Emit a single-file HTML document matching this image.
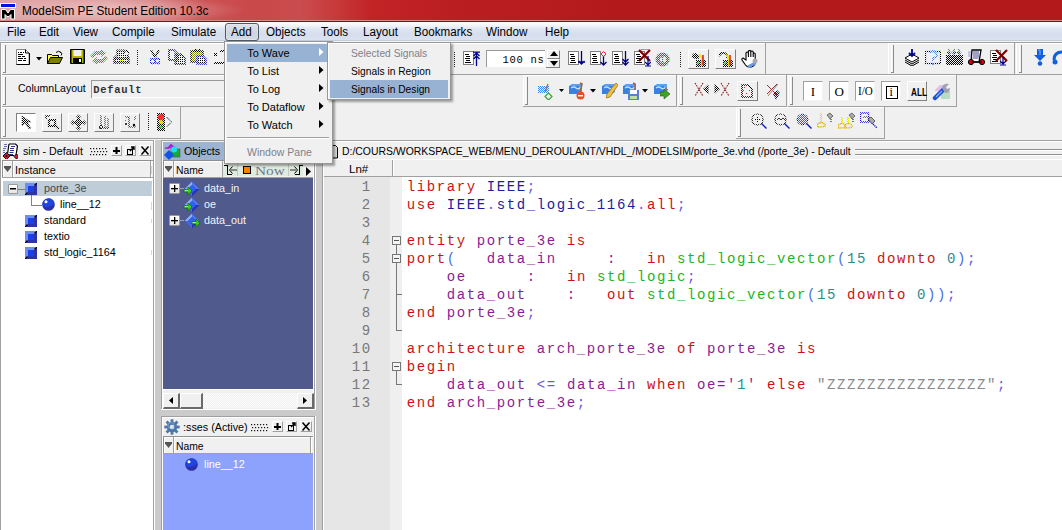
<!DOCTYPE html>
<html><head><meta charset="utf-8"><style>
html,body{margin:0;padding:0;}
body{width:1062px;height:530px;overflow:hidden;position:relative;background:#f0f0f0;font-family:'Liberation Sans',sans-serif;}
body div, body svg{position:absolute;}
.t{white-space:pre;line-height:1;}
.t span{position:static;}
</style></head><body>
<div style="left:0px;top:0px;width:1062px;height:530px;background:#f0f0f0"></div>
<div style="left:0px;top:0px;width:1062px;height:21px;background:linear-gradient(90deg,#dea6a8 0px,#dc9c9e 110px,#d47e80 160px,#cc5456 205px,#c9484a 250px,#cb4c4e 300px,#c83a3c 335px,#c22426 370px,#bb1e20 460px,#b3191b 620px,#b3191b 1062px)"></div>
<div style="left:0px;top:0px;width:250px;height:21px;background:radial-gradient(ellipse 130px 13px at 115px 10px, rgba(255,225,225,0.5), rgba(255,225,225,0))"></div>
<div style="left:0px;top:20px;width:1062px;height:1px;background:#d98a8c"></div>
<div style="left:0px;top:21px;width:1062px;height:1px;background:#5a2020"></div>
<svg style="left:0px;top:2px" width="17" height="18" viewBox="0 0 17 18"><rect x="0" y="1" width="16" height="5" fill="#fff" opacity="0.9"/><rect x="1" y="2" width="14" height="3" fill="#0010f0"/><path d="M1.5 17V7.5h4l2.5 3.5 2.5-3.5h4V17h-3.5v-4.5L9 14.5H7L5 12.5V17z" fill="#000" stroke="#fff" stroke-width="1"/></svg>
<div class="t" style="left:22px;top:4.54px;font-size:12px;font-family:'Liberation Sans',sans-serif;color:#000;transform:scaleX(0.98);transform-origin:0 0;">ModelSim PE Student Edition 10.3c</div>
<div style="left:0px;top:22px;width:1062px;height:18px;background:linear-gradient(180deg,#fbfcfe 0px,#f4f6fb 3px,#dfe5f1 7px,#d6deee 12px,#dae1f0 18px)"></div>
<div style="left:0px;top:40px;width:1062px;height:1px;background:#c5cbd8"></div>
<div style="left:0px;top:41px;width:1062px;height:1px;background:#f5f5f5"></div>
<div style="left:225px;top:23px;width:32px;height:16px;border:1px solid #4f5964;border-radius:3px;background:linear-gradient(180deg,#dde1e8,#d3d9e2 45%,#cdd4e0 55%,#d4dae6);box-shadow:inset 0 0 0 1px rgba(255,255,255,0.25)"></div>
<div class="t" style="left:6.7px;top:25.74px;font-size:12px;font-family:'Liberation Sans',sans-serif;color:#000;transform:scaleX(0.97);transform-origin:0 0;">File</div>
<div class="t" style="left:38.7px;top:25.74px;font-size:12px;font-family:'Liberation Sans',sans-serif;color:#000;transform:scaleX(0.97);transform-origin:0 0;">Edit</div>
<div class="t" style="left:72.5px;top:25.74px;font-size:12px;font-family:'Liberation Sans',sans-serif;color:#000;transform:scaleX(0.97);transform-origin:0 0;">View</div>
<div class="t" style="left:111.8px;top:25.74px;font-size:12px;font-family:'Liberation Sans',sans-serif;color:#000;transform:scaleX(0.97);transform-origin:0 0;">Compile</div>
<div class="t" style="left:170.5px;top:25.74px;font-size:12px;font-family:'Liberation Sans',sans-serif;color:#000;transform:scaleX(0.97);transform-origin:0 0;">Simulate</div>
<div class="t" style="left:230.7px;top:25.74px;font-size:12px;font-family:'Liberation Sans',sans-serif;color:#000;transform:scaleX(0.97);transform-origin:0 0;">Add</div>
<div class="t" style="left:266.2px;top:25.74px;font-size:12px;font-family:'Liberation Sans',sans-serif;color:#000;transform:scaleX(0.97);transform-origin:0 0;">Objects</div>
<div class="t" style="left:320.9px;top:25.74px;font-size:12px;font-family:'Liberation Sans',sans-serif;color:#000;transform:scaleX(0.97);transform-origin:0 0;">Tools</div>
<div class="t" style="left:363.4px;top:25.74px;font-size:12px;font-family:'Liberation Sans',sans-serif;color:#000;transform:scaleX(0.97);transform-origin:0 0;">Layout</div>
<div class="t" style="left:413.9px;top:25.74px;font-size:12px;font-family:'Liberation Sans',sans-serif;color:#000;transform:scaleX(0.97);transform-origin:0 0;">Bookmarks</div>
<div class="t" style="left:486.2px;top:25.74px;font-size:12px;font-family:'Liberation Sans',sans-serif;color:#000;transform:scaleX(0.97);transform-origin:0 0;">Window</div>
<div class="t" style="left:544.7px;top:25.74px;font-size:12px;font-family:'Liberation Sans',sans-serif;color:#000;transform:scaleX(0.97);transform-origin:0 0;">Help</div>
<div style="left:0px;top:42px;width:1062px;height:1px;background:#a0a0a0"></div>
<div style="left:0px;top:74px;width:1062px;height:1px;background:#a0a0a0"></div>
<div style="left:0px;top:43px;width:765px;height:1px;background:#ffffff"></div>
<div style="left:0px;top:43px;width:1px;height:31px;background:#ffffff"></div>
<div style="left:765px;top:42px;width:1px;height:33px;background:#a0a0a0"></div>
<div style="left:3px;top:45px;width:1px;height:28px;background:#ffffff"></div>
<div style="left:5px;top:45px;width:1px;height:28px;background:#8a8a8a"></div>
<div style="left:3px;top:72px;width:3px;height:1px;background:#8a8a8a"></div>
<div style="left:888px;top:43px;width:126px;height:1px;background:#ffffff"></div>
<div style="left:888px;top:43px;width:1px;height:31px;background:#ffffff"></div>
<div style="left:1014px;top:42px;width:1px;height:33px;background:#a0a0a0"></div>
<div style="left:891px;top:45px;width:1px;height:28px;background:#ffffff"></div>
<div style="left:893px;top:45px;width:1px;height:28px;background:#8a8a8a"></div>
<div style="left:891px;top:72px;width:3px;height:1px;background:#8a8a8a"></div>
<div style="left:1016px;top:43px;width:54px;height:1px;background:#ffffff"></div>
<div style="left:1016px;top:43px;width:1px;height:31px;background:#ffffff"></div>
<div style="left:1070px;top:42px;width:1px;height:33px;background:#a0a0a0"></div>
<div style="left:1019px;top:45px;width:1px;height:28px;background:#ffffff"></div>
<div style="left:1021px;top:45px;width:1px;height:28px;background:#8a8a8a"></div>
<div style="left:1019px;top:72px;width:3px;height:1px;background:#8a8a8a"></div>
<div style="left:0px;top:75px;width:331px;height:1px;background:#ffffff"></div>
<div style="left:0px;top:75px;width:1px;height:31px;background:#ffffff"></div>
<div style="left:0px;top:106px;width:332px;height:1px;background:#a0a0a0"></div>
<div style="left:331px;top:74px;width:1px;height:33px;background:#a0a0a0"></div>
<div style="left:3px;top:77px;width:1px;height:28px;background:#ffffff"></div>
<div style="left:5px;top:77px;width:1px;height:28px;background:#8a8a8a"></div>
<div style="left:3px;top:104px;width:3px;height:1px;background:#8a8a8a"></div>
<div style="left:523px;top:75px;width:153px;height:1px;background:#ffffff"></div>
<div style="left:523px;top:75px;width:1px;height:31px;background:#ffffff"></div>
<div style="left:523px;top:106px;width:154px;height:1px;background:#a0a0a0"></div>
<div style="left:676px;top:74px;width:1px;height:33px;background:#a0a0a0"></div>
<div style="left:525px;top:77px;width:1px;height:28px;background:#ffffff"></div>
<div style="left:527px;top:77px;width:1px;height:28px;background:#8a8a8a"></div>
<div style="left:525px;top:104px;width:3px;height:1px;background:#8a8a8a"></div>
<div style="left:678px;top:75px;width:108px;height:1px;background:#ffffff"></div>
<div style="left:678px;top:75px;width:1px;height:31px;background:#ffffff"></div>
<div style="left:678px;top:106px;width:109px;height:1px;background:#a0a0a0"></div>
<div style="left:786px;top:74px;width:1px;height:33px;background:#a0a0a0"></div>
<div style="left:680px;top:77px;width:1px;height:28px;background:#ffffff"></div>
<div style="left:682px;top:77px;width:1px;height:28px;background:#8a8a8a"></div>
<div style="left:680px;top:104px;width:3px;height:1px;background:#8a8a8a"></div>
<div style="left:788px;top:75px;width:168px;height:1px;background:#ffffff"></div>
<div style="left:788px;top:75px;width:1px;height:31px;background:#ffffff"></div>
<div style="left:788px;top:106px;width:169px;height:1px;background:#a0a0a0"></div>
<div style="left:956px;top:74px;width:1px;height:33px;background:#a0a0a0"></div>
<div style="left:790px;top:77px;width:1px;height:28px;background:#ffffff"></div>
<div style="left:792px;top:77px;width:1px;height:28px;background:#8a8a8a"></div>
<div style="left:790px;top:104px;width:3px;height:1px;background:#8a8a8a"></div>
<div style="left:0px;top:107px;width:180px;height:1px;background:#ffffff"></div>
<div style="left:0px;top:107px;width:1px;height:31px;background:#ffffff"></div>
<div style="left:0px;top:138px;width:181px;height:1px;background:#a0a0a0"></div>
<div style="left:180px;top:106px;width:1px;height:33px;background:#a0a0a0"></div>
<div style="left:3px;top:109px;width:1px;height:28px;background:#ffffff"></div>
<div style="left:5px;top:109px;width:1px;height:28px;background:#8a8a8a"></div>
<div style="left:3px;top:136px;width:3px;height:1px;background:#8a8a8a"></div>
<div style="left:736px;top:107px;width:148px;height:1px;background:#ffffff"></div>
<div style="left:736px;top:107px;width:1px;height:31px;background:#ffffff"></div>
<div style="left:736px;top:138px;width:149px;height:1px;background:#a0a0a0"></div>
<div style="left:884px;top:106px;width:1px;height:33px;background:#a0a0a0"></div>
<div style="left:738px;top:109px;width:1px;height:28px;background:#ffffff"></div>
<div style="left:740px;top:109px;width:1px;height:28px;background:#8a8a8a"></div>
<div style="left:738px;top:136px;width:3px;height:1px;background:#8a8a8a"></div>
<div style="left:0px;top:42px;width:1px;height:97px;background:#a0a0a0"></div>
<div style="left:1px;top:43px;width:1px;height:95px;background:#ffffff"></div>
<div style="left:155px;top:140px;width:6px;height:390px;background:#cbcbcb"></div>
<div style="left:316px;top:140px;width:6px;height:390px;background:#cbcbcb"></div>
<div style="left:0px;top:140px;width:154px;height:1px;background:#a0a0a0"></div>
<div style="left:0px;top:140px;width:1px;height:390px;background:#a0a0a0"></div>
<div style="left:1px;top:141px;width:152px;height:1px;background:#ffffff"></div>
<div style="left:1px;top:141px;width:1px;height:389px;background:#ffffff"></div>
<div style="left:153px;top:140px;width:1px;height:390px;background:#a0a0a0"></div>
<div style="left:154px;top:140px;width:1px;height:390px;background:#ffffff"></div>
<div class="t" style="left:22.6px;top:145.89px;font-size:11px;font-family:'Liberation Sans',sans-serif;color:#000;transform:scaleX(0.97);transform-origin:0 0;">sim - Default</div>
<svg style="left:90px;top:148px" width="18" height="8"><g fill="#111"><rect x="0" y="0" width="1.2" height="1.2"/><rect x="3" y="0" width="1.2" height="1.2"/><rect x="6" y="0" width="1.2" height="1.2"/><rect x="9" y="0" width="1.2" height="1.2"/><rect x="12" y="0" width="1.2" height="1.2"/><rect x="15" y="0" width="1.2" height="1.2"/><rect x="1" y="3" width="1.2" height="1.2"/><rect x="4" y="3" width="1.2" height="1.2"/><rect x="7" y="3" width="1.2" height="1.2"/><rect x="10" y="3" width="1.2" height="1.2"/><rect x="13" y="3" width="1.2" height="1.2"/><rect x="16" y="3" width="1.2" height="1.2"/><rect x="0" y="6" width="1.2" height="1.2"/><rect x="3" y="6" width="1.2" height="1.2"/><rect x="6" y="6" width="1.2" height="1.2"/><rect x="9" y="6" width="1.2" height="1.2"/><rect x="12" y="6" width="1.2" height="1.2"/><rect x="15" y="6" width="1.2" height="1.2"/></g></svg>
<div style="left:111px;top:145px;width:11px;height:11px;background:#f0f0f0;border-top:1px solid #fff;border-left:1px solid #fff;border-right:1px solid #a0a0a0;border-bottom:1px solid #a0a0a0;box-sizing:border-box"></div>
<svg style="left:111px;top:145px" width="11" height="11"><path d="M2 5h7v2H2zM4.5 2h2v7h-2z" fill="#000"/></svg>
<div style="left:125px;top:145px;width:11px;height:11px;background:#f0f0f0;border-top:1px solid #fff;border-left:1px solid #fff;border-right:1px solid #a0a0a0;border-bottom:1px solid #a0a0a0;box-sizing:border-box"></div>
<svg style="left:125px;top:145px" width="11" height="11"><rect x="2.5" y="4.5" width="5" height="5" fill="none" stroke="#000"/><path d="M5 6L9 2M6 2h3v3" stroke="#000" stroke-width="1.4" fill="none"/></svg>
<div style="left:139px;top:145px;width:12px;height:11px;background:#f0f0f0;border-top:1px solid #fff;border-left:1px solid #fff;border-right:1px solid #a0a0a0;border-bottom:1px solid #a0a0a0;box-sizing:border-box"></div>
<svg style="left:139px;top:145px" width="12" height="11"><path d="M2.5 1.5l7 8M9.5 1.5l-7 8" stroke="#000" stroke-width="1.5"/></svg>
<div style="left:2px;top:161px;width:151px;height:16px;background:#f0f0f0"></div>
<div style="left:2px;top:160px;width:151px;height:1px;background:#909090"></div>
<div style="left:2px;top:160px;width:1px;height:17px;background:#909090"></div>
<div style="left:3px;top:161px;width:150px;height:1px;background:#ffffff"></div>
<div style="left:3px;top:161px;width:1px;height:16px;background:#ffffff"></div>
<div style="left:2px;top:177px;width:151px;height:1px;background:#a0a0a0"></div>
<div style="left:12px;top:161px;width:1px;height:16px;background:#a0a0a0"></div>
<div style="left:13px;top:161px;width:1px;height:16px;background:#ffffff"></div>
<div style="left:150px;top:161px;width:1px;height:16px;background:#a0a0a0"></div>
<div style="left:151px;top:161px;width:1px;height:16px;background:#ffffff"></div>
<svg style="left:3px;top:165px" width="9" height="9"><path d="M1 1h7v1.5L4.5 7 1 2.5z" fill="#555"/></svg>
<div class="t" style="left:14.6px;top:164.59px;font-size:11px;font-family:'Liberation Sans',sans-serif;color:#000;transform:scaleX(0.98);transform-origin:0 0;">Instance</div>
<div style="left:2px;top:178px;width:151px;height:352px;background:#ffffff"></div>
<div style="left:3px;top:181px;width:149px;height:15px;background:#bfcdd9"></div>
<div style="left:151px;top:166px;width:1px;height:8px;background:#f2d890"></div>
<div style="left:151px;top:185px;width:1px;height:9px;background:#f2d890"></div>
<div style="left:151px;top:202px;width:1px;height:8px;background:#f2d890"></div>
<div style="left:151px;top:219px;width:1px;height:4px;background:#f2d890"></div>
<div style="left:151px;top:250px;width:1px;height:5px;background:#f2d890"></div>
<div style="left:8px;top:184px;width:10px;height:10px;box-sizing:border-box;border:1px solid #9a9a9a;border-radius:1px;background:linear-gradient(180deg,#ffffff,#e4e4e4)"></div>
<div style="left:10px;top:188px;width:6px;height:1px;background:#000"></div>
<div style="left:10px;top:189px;width:6px;height:1px;background:#777"></div>
<div style="left:18px;top:189px;width:7px;height:1px;background:#808080"></div>
<svg style="left:25px;top:183px" width="12" height="12"><path d="M0 0h12L0 12z" fill="#6e8cf2"/><path d="M12 0v12H0z" fill="#2f33a8"/><rect x="3" y="3" width="6" height="6" fill="#1a40e6"/><path d="M9.5 2.5L12 0M0 12l2.5-2.5" stroke="#000" stroke-width="1.2"/></svg>
<div class="t" style="left:43.5px;top:183.19px;font-size:11px;font-family:'Liberation Sans',sans-serif;color:#44474f;transform:scaleX(0.98);transform-origin:0 0;">porte_3e</div>
<div style="left:31px;top:195px;width:1px;height:10px;background:#808080"></div>
<div style="left:31px;top:205px;width:11px;height:1px;background:#808080"></div>
<svg style="left:42px;top:198px" width="13" height="13" viewBox="0 0 13 13"><circle cx="6.5" cy="6.5" r="6.3" fill="#2c2fa8"/><path d="M0.4 6.5A6.1 6.1 0 0 1 12.2 4.5 6 6 0 0 1 6.5 8.5 4 4 0 0 1 0.4 6.5z" fill="#1f44e0"/><circle cx="4" cy="3.8" r="1.5" fill="#fff"/></svg>
<div class="t" style="left:60px;top:199.19px;font-size:11px;font-family:'Liberation Sans',sans-serif;color:#000;transform:scaleX(0.98);transform-origin:0 0;">line__12</div>
<svg style="left:25px;top:215px" width="12" height="12"><path d="M0 0h12L0 12z" fill="#6e8cf2"/><path d="M12 0v12H0z" fill="#2f33a8"/><rect x="3" y="3" width="6" height="6" fill="#1a40e6"/><path d="M9.5 2.5L12 0M0 12l2.5-2.5" stroke="#000" stroke-width="1.2"/></svg>
<div class="t" style="left:43.5px;top:215.19px;font-size:11px;font-family:'Liberation Sans',sans-serif;color:#000;transform:scaleX(0.98);transform-origin:0 0;">standard</div>
<svg style="left:25px;top:231px" width="12" height="12"><path d="M0 0h12L0 12z" fill="#6e8cf2"/><path d="M12 0v12H0z" fill="#2f33a8"/><rect x="3" y="3" width="6" height="6" fill="#1a40e6"/><path d="M9.5 2.5L12 0M0 12l2.5-2.5" stroke="#000" stroke-width="1.2"/></svg>
<div class="t" style="left:43.5px;top:231.19px;font-size:11px;font-family:'Liberation Sans',sans-serif;color:#000;transform:scaleX(0.98);transform-origin:0 0;">textio</div>
<svg style="left:25px;top:247px" width="12" height="12"><path d="M0 0h12L0 12z" fill="#6e8cf2"/><path d="M12 0v12H0z" fill="#2f33a8"/><rect x="3" y="3" width="6" height="6" fill="#1a40e6"/><path d="M9.5 2.5L12 0M0 12l2.5-2.5" stroke="#000" stroke-width="1.2"/></svg>
<div class="t" style="left:43.5px;top:247.19px;font-size:11px;font-family:'Liberation Sans',sans-serif;color:#000;transform:scaleX(0.98);transform-origin:0 0;">std_logic_1164</div>
<div style="left:161px;top:140px;width:155px;height:1px;background:#a0a0a0"></div>
<div style="left:161px;top:140px;width:1px;height:270px;background:#a0a0a0"></div>
<div style="left:162px;top:141px;width:1px;height:269px;background:#ffffff"></div>
<div style="left:314px;top:140px;width:1px;height:270px;background:#a0a0a0"></div>
<div style="left:313px;top:141px;width:1px;height:269px;background:#ffffff"></div>
<div style="left:315px;top:140px;width:1px;height:270px;background:#ffffff"></div>
<div style="left:163px;top:142px;width:150px;height:18px;background:#9cb4d2"></div>
<svg style="left:164px;top:143px" width="17" height="17"><path d="M3 6L7 1l4 3-2 1z" fill="#b020d8"/><path d="M1 5h3l3-3 2 2" fill="none" stroke="#b020d8" stroke-width="1.6"/><rect x="7" y="6" width="9" height="8" fill="#1ea83a" stroke="#444" stroke-width="0.5"/><circle cx="10" cy="6.5" r="3" fill="#18e0f0"/><path d="M5 7L10 12 5 17 0 12z" fill="#1252e8"/></svg>
<div class="t" style="left:183.9px;top:146.09px;font-size:11px;font-family:'Liberation Sans',sans-serif;color:#000;transform:scaleX(0.97);transform-origin:0 0;">Objects</div>
<div style="left:163px;top:161px;width:150px;height:16px;background:#f0f0f0"></div>
<div style="left:163px;top:160px;width:150px;height:1px;background:#909090"></div>
<div style="left:163px;top:160px;width:1px;height:17px;background:#909090"></div>
<div style="left:164px;top:161px;width:149px;height:1px;background:#ffffff"></div>
<div style="left:164px;top:161px;width:1px;height:16px;background:#ffffff"></div>
<div style="left:163px;top:177px;width:150px;height:1px;background:#a0a0a0"></div>
<div style="left:173px;top:161px;width:1px;height:16px;background:#a0a0a0"></div>
<div style="left:174px;top:161px;width:1px;height:16px;background:#ffffff"></div>
<svg style="left:164px;top:165px" width="9" height="9"><path d="M1 1h7v1.5L4.5 7 1 2.5z" fill="#555"/></svg>
<div class="t" style="left:175.5px;top:164.59px;font-size:11px;font-family:'Liberation Sans',sans-serif;color:#000;transform:scaleX(0.94);transform-origin:0 0;">Name</div>
<div style="left:222px;top:161px;width:1px;height:16px;background:#a0a0a0"></div>
<div style="left:223px;top:164px;width:80px;height:12px;background:#e0ebe0"></div>
<div style="left:237px;top:164px;width:1px;height:12px;background:#c0c8c0"></div>
<div style="left:288px;top:164px;width:1px;height:12px;background:#c0c8c0"></div>
<svg style="left:224px;top:165px" width="13" height="11"><g fill="#000"><rect x="0" y="0" width="3" height="1"/><rect x="3" y="0" width="1" height="10"/><rect x="3" y="9" width="5" height="1"/></g><rect x="7" y="4" width="6" height="2" fill="#888"/><path d="M8.5 1.5L5.5 5l3 3.5" fill="none" stroke="#000" stroke-width="1"/></svg>
<div style="left:243px;top:166px;width:8px;height:8px;background:#ff8000;border:1px solid #000;box-sizing:border-box"></div>
<div class="t" style="left:255px;top:163.91px;font-size:13px;font-family:'Liberation Serif',serif;color:#6a7890;transform:scaleX(1.18);transform-origin:0 0;">Now</div>
<svg style="left:290px;top:165px" width="13" height="11"><g fill="#000"><rect x="9" y="0" width="4" height="1"/><rect x="9" y="0" width="1" height="10"/><rect x="5" y="9" width="5" height="1"/></g><rect x="0" y="4" width="6" height="2" fill="#888"/><path d="M4.5 1.5L7.5 5l-3 3.5" fill="none" stroke="#000" stroke-width="1"/></svg>
<svg style="left:306px;top:167px" width="5" height="9"><path d="M0 0l5 4.5L0 9z" fill="#000"/></svg>
<div style="left:163px;top:178px;width:150px;height:211px;background:#505a8c"></div>
<div style="left:169px;top:183px;width:11px;height:11px;box-sizing:border-box;border:1px solid #9a9a9a;border-radius:1px;background:linear-gradient(180deg,#ffffff,#e4e4e4)"></div>
<div style="left:171px;top:188px;width:7px;height:1px;background:#000"></div>
<div style="left:174px;top:185px;width:1px;height:7px;background:#000"></div>
<div style="left:171px;top:189px;width:7px;height:1px;background:rgba(0,0,0,0.3)"></div>
<div style="left:175px;top:185px;width:1px;height:7px;background:rgba(0,0,0,0.3)"></div>
<div style="left:180px;top:188px;width:4px;height:1px;background:#a0a0a0"></div>
<svg style="left:183px;top:181px" width="17" height="16"><path d="M9 0.5L16.5 8 9 15.5 1.5 8z" fill="#2a34b8"/><path d="M9 0.5L1.5 8h3.5L9 4z" fill="#8ab0fa"/><path d="M9 0.5L16.5 8H13L9 4z" fill="#5078e8"/><path d="M9 4L13 8 9 12 5 8z" fill="#2f62ee"/><path d="M5 8L9 12v3.5L1.5 8z" fill="#4a66d8"/><path d="M1 9h4v-3l4 4-4 4v-3h-4z" fill="#38d018" stroke="#0e6a00" stroke-width="0.7"/><path d="M1.5 9.6h3.5" stroke="#d8ffc8" stroke-width="0.8"/></svg>
<div class="t" style="left:203.6px;top:182.99px;font-size:11px;font-family:'Liberation Sans',sans-serif;color:#f4f4f4;transform:scaleX(0.98);transform-origin:0 0;">data_in</div>
<svg style="left:183px;top:197px" width="17" height="16"><path d="M9 0.5L16.5 8 9 15.5 1.5 8z" fill="#2a34b8"/><path d="M9 0.5L1.5 8h3.5L9 4z" fill="#8ab0fa"/><path d="M9 0.5L16.5 8H13L9 4z" fill="#5078e8"/><path d="M9 4L13 8 9 12 5 8z" fill="#2f62ee"/><path d="M5 8L9 12v3.5L1.5 8z" fill="#4a66d8"/><path d="M1 9h4v-3l4 4-4 4v-3h-4z" fill="#38d018" stroke="#0e6a00" stroke-width="0.7"/><path d="M1.5 9.6h3.5" stroke="#d8ffc8" stroke-width="0.8"/></svg>
<div class="t" style="left:203.6px;top:198.99px;font-size:11px;font-family:'Liberation Sans',sans-serif;color:#f4f4f4;transform:scaleX(0.98);transform-origin:0 0;">oe</div>
<div style="left:169px;top:215px;width:11px;height:11px;box-sizing:border-box;border:1px solid #9a9a9a;border-radius:1px;background:linear-gradient(180deg,#ffffff,#e4e4e4)"></div>
<div style="left:171px;top:220px;width:7px;height:1px;background:#000"></div>
<div style="left:174px;top:217px;width:1px;height:7px;background:#000"></div>
<div style="left:171px;top:221px;width:7px;height:1px;background:rgba(0,0,0,0.3)"></div>
<div style="left:175px;top:217px;width:1px;height:7px;background:rgba(0,0,0,0.3)"></div>
<div style="left:180px;top:220px;width:4px;height:1px;background:#a0a0a0"></div>
<svg style="left:183px;top:213px" width="17" height="16"><path d="M9 0.5L16.5 8 9 15.5 1.5 8z" fill="#2a34b8"/><path d="M9 0.5L1.5 8h3.5L9 4z" fill="#8ab0fa"/><path d="M9 0.5L16.5 8H13L9 4z" fill="#5078e8"/><path d="M9 4L13 8 9 12 5 8z" fill="#2f62ee"/><path d="M5 8L9 12v3.5L1.5 8z" fill="#4a66d8"/><path d="M9 9h4v-3l4 4-4 4v-3h-4z" fill="#38d018" stroke="#0e6a00" stroke-width="0.7"/><path d="M9.5 9.6h3.5" stroke="#d8ffc8" stroke-width="0.8"/></svg>
<div class="t" style="left:203.6px;top:214.99px;font-size:11px;font-family:'Liberation Sans',sans-serif;color:#f4f4f4;transform:scaleX(0.98);transform-origin:0 0;">data_out</div>
<div style="left:163px;top:389px;width:150px;height:1px;background:#ffffff"></div>
<div style="left:163px;top:390px;width:150px;height:19px;background:#f0f0f0"></div>
<div style="left:179px;top:393px;width:118px;height:15px;background-color:#fdfdfd;background-image:linear-gradient(45deg,#f0f0f0 25%,transparent 25%,transparent 75%,#f0f0f0 75%),linear-gradient(45deg,#f0f0f0 25%,transparent 25%,transparent 75%,#f0f0f0 75%);background-size:2px 2px;background-position:0 0,1px 1px"></div>
<div style="left:163px;top:393px;width:17px;height:16px;background:#f0f0f0;border-top:1px solid #fff;border-left:1px solid #fff;border-right:2px solid #6a6a6a;border-bottom:2px solid #6a6a6a;box-sizing:border-box"></div>
<svg style="left:169px;top:397px" width="4" height="7"><path d="M4 0v7L0 3.5z" fill="#000"/></svg>
<div style="left:180px;top:393px;width:23px;height:16px;background:#f0f0f0;border-top:1px solid #fff;border-left:1px solid #fff;border-right:2px solid #6a6a6a;border-bottom:2px solid #6a6a6a;box-sizing:border-box"></div>
<div style="left:297px;top:393px;width:17px;height:16px;background:#f0f0f0;border-top:1px solid #fff;border-left:1px solid #fff;border-right:2px solid #6a6a6a;border-bottom:2px solid #6a6a6a;box-sizing:border-box"></div>
<svg style="left:303px;top:397px" width="4" height="7"><path d="M0 0v7l4-3.5z" fill="#000"/></svg>
<div style="left:161px;top:409px;width:155px;height:1px;background:#ffffff"></div>
<div style="left:155px;top:410px;width:167px;height:6px;background:#cbcbcb"></div>
<div style="left:161px;top:416px;width:155px;height:1px;background:#a0a0a0"></div>
<div style="left:162px;top:417px;width:152px;height:1px;background:#ffffff"></div>
<div style="left:161px;top:416px;width:1px;height:114px;background:#a0a0a0"></div>
<div style="left:162px;top:417px;width:1px;height:113px;background:#ffffff"></div>
<div style="left:314px;top:416px;width:1px;height:114px;background:#a0a0a0"></div>
<div style="left:315px;top:416px;width:1px;height:114px;background:#ffffff"></div>
<svg style="left:164px;top:419px" width="16" height="16" viewBox="0 0 16 16"><g fill="#4f77a8"><circle cx="8" cy="8" r="5.2"/><rect x="6.6" y="0.3" width="2.8" height="15.4"/><rect x="0.3" y="6.6" width="15.4" height="2.8"/><rect x="6.6" y="0.3" width="2.8" height="15.4" transform="rotate(45 8 8)"/><rect x="6.6" y="0.3" width="2.8" height="15.4" transform="rotate(-45 8 8)"/></g><circle cx="8" cy="8" r="2.3" fill="#dfe8f2"/><circle cx="7" cy="6.5" r="3" fill="none" stroke="#9fc0e0" stroke-width="0.7" opacity="0.7"/></svg>
<div class="t" style="left:182.5px;top:421.89px;font-size:11px;font-family:'Liberation Sans',sans-serif;color:#000;transform:scaleX(0.98);transform-origin:0 0;">:sses (Active)</div>
<svg style="left:251px;top:424px" width="18" height="8"><g fill="#111"><rect x="0" y="0" width="1.2" height="1.2"/><rect x="3" y="0" width="1.2" height="1.2"/><rect x="6" y="0" width="1.2" height="1.2"/><rect x="9" y="0" width="1.2" height="1.2"/><rect x="12" y="0" width="1.2" height="1.2"/><rect x="15" y="0" width="1.2" height="1.2"/><rect x="1" y="3" width="1.2" height="1.2"/><rect x="4" y="3" width="1.2" height="1.2"/><rect x="7" y="3" width="1.2" height="1.2"/><rect x="10" y="3" width="1.2" height="1.2"/><rect x="13" y="3" width="1.2" height="1.2"/><rect x="16" y="3" width="1.2" height="1.2"/><rect x="0" y="6" width="1.2" height="1.2"/><rect x="3" y="6" width="1.2" height="1.2"/><rect x="6" y="6" width="1.2" height="1.2"/><rect x="9" y="6" width="1.2" height="1.2"/><rect x="12" y="6" width="1.2" height="1.2"/><rect x="15" y="6" width="1.2" height="1.2"/></g></svg>
<div style="left:272px;top:421px;width:11px;height:11px;background:#f0f0f0;border-top:1px solid #fff;border-left:1px solid #fff;border-right:1px solid #a0a0a0;border-bottom:1px solid #a0a0a0;box-sizing:border-box"></div>
<svg style="left:272px;top:421px" width="11" height="11"><path d="M2 5h7v2H2zM4.5 2h2v7h-2z" fill="#000"/></svg>
<div style="left:286px;top:421px;width:11px;height:11px;background:#f0f0f0;border-top:1px solid #fff;border-left:1px solid #fff;border-right:1px solid #a0a0a0;border-bottom:1px solid #a0a0a0;box-sizing:border-box"></div>
<svg style="left:286px;top:421px" width="11" height="11"><rect x="2.5" y="4.5" width="5" height="5" fill="none" stroke="#000"/><path d="M5 6L9 2M6 2h3v3" stroke="#000" stroke-width="1.4" fill="none"/></svg>
<div style="left:300px;top:421px;width:12px;height:11px;background:#f0f0f0;border-top:1px solid #fff;border-left:1px solid #fff;border-right:1px solid #a0a0a0;border-bottom:1px solid #a0a0a0;box-sizing:border-box"></div>
<svg style="left:300px;top:421px" width="12" height="11"><path d="M2.5 1.5l7 8M9.5 1.5l-7 8" stroke="#000" stroke-width="1.5"/></svg>
<div style="left:163px;top:437px;width:150px;height:16px;background:#f0f0f0"></div>
<div style="left:163px;top:436px;width:150px;height:1px;background:#909090"></div>
<div style="left:163px;top:436px;width:1px;height:17px;background:#909090"></div>
<div style="left:164px;top:437px;width:149px;height:1px;background:#ffffff"></div>
<div style="left:164px;top:437px;width:1px;height:16px;background:#ffffff"></div>
<div style="left:163px;top:453px;width:150px;height:1px;background:#a0a0a0"></div>
<div style="left:173px;top:437px;width:1px;height:16px;background:#a0a0a0"></div>
<div style="left:174px;top:437px;width:1px;height:16px;background:#ffffff"></div>
<div style="left:310px;top:437px;width:1px;height:16px;background:#a0a0a0"></div>
<div style="left:311px;top:437px;width:1px;height:16px;background:#ffffff"></div>
<svg style="left:164px;top:441px" width="9" height="9"><path d="M1 1h7v1.5L4.5 7 1 2.5z" fill="#555"/></svg>
<div class="t" style="left:175.5px;top:440.99px;font-size:11px;font-family:'Liberation Sans',sans-serif;color:#000;transform:scaleX(0.94);transform-origin:0 0;">Name</div>
<div style="left:163px;top:454px;width:150px;height:76px;background:#8ca2fc"></div>
<svg style="left:185px;top:458px" width="13" height="13" viewBox="0 0 13 13"><circle cx="6.5" cy="6.5" r="6.3" fill="#2c2fa8"/><path d="M0.4 6.5A6.1 6.1 0 0 1 12.2 4.5 6 6 0 0 1 6.5 8.5 4 4 0 0 1 0.4 6.5z" fill="#1f44e0"/><circle cx="4" cy="3.8" r="1.5" fill="#fff"/></svg>
<div class="t" style="left:203.7px;top:458.89px;font-size:11px;font-family:'Liberation Sans',sans-serif;color:#ffffff;transform:scaleX(0.98);transform-origin:0 0;">line__12</div>
<div style="left:322px;top:140px;width:740px;height:1px;background:#a0a0a0"></div>
<div style="left:323px;top:141px;width:739px;height:1px;background:#ffffff"></div>
<div style="left:322px;top:140px;width:1px;height:390px;background:#a0a0a0"></div>
<div style="left:323px;top:141px;width:1px;height:389px;background:#ffffff"></div>
<svg style="left:330px;top:145px" width="9" height="14"><path d="M0.5 0.5h5l2 2v10.5h-7z" fill="#d8d8d8" stroke="#000"/><rect x="1" y="3" width="1.5" height="8" fill="#1010d0"/></svg>
<div class="t" style="left:341.7px;top:146.09px;font-size:11px;font-family:'Liberation Sans',sans-serif;color:#000;transform:scaleX(0.947);transform-origin:0 0;">D:/COURS/WORKSPACE_WEB/MENU_DEROULANT/VHDL_/MODELSIM/porte_3e.vhd (/porte_3e) - Default</div>
<div style="left:855px;top:149px;width:207px;height:1px;background:#909090"></div>
<div style="left:855px;top:150px;width:207px;height:1px;background:#ffffff"></div>
<div style="left:855px;top:154px;width:207px;height:1px;background:#909090"></div>
<div style="left:855px;top:155px;width:207px;height:1px;background:#ffffff"></div>
<div style="left:324px;top:159px;width:738px;height:1px;background:#ffffff"></div>
<div style="left:324px;top:160px;width:738px;height:16px;background:#f0f0f0"></div>
<div style="left:324px;top:176px;width:738px;height:1px;background:#a0a0a0"></div>
<div style="left:392px;top:160px;width:1px;height:16px;background:#a0a0a0"></div>
<div style="left:393px;top:160px;width:1px;height:16px;background:#ffffff"></div>
<div class="t" style="left:349.3px;top:163.69px;font-size:11px;font-family:'Liberation Sans',sans-serif;color:#000;transform:scaleX(1.05);transform-origin:0 0;">Ln#</div>
<div style="left:324px;top:177px;width:66px;height:353px;background:#e6e6e6"></div>
<div style="left:390px;top:177px;width:12px;height:353px;background:#efefef"></div>
<div style="left:402px;top:177px;width:660px;height:353px;background:#ffffff"></div>
<div style="left:392px;top:236px;width:9px;height:9px;box-sizing:border-box;border:1px solid #777;background:#f4f4f4"></div>
<div style="left:394px;top:240px;width:5px;height:1px;background:#555"></div>
<div style="left:392px;top:254px;width:9px;height:9px;box-sizing:border-box;border:1px solid #777;background:#f4f4f4"></div>
<div style="left:394px;top:258px;width:5px;height:1px;background:#555"></div>
<div style="left:396px;top:245px;width:1px;height:9px;background:#777"></div>
<div style="left:396px;top:263px;width:1px;height:68px;background:#777"></div>
<div style="left:396px;top:294px;width:6px;height:1px;background:#777"></div>
<div style="left:396px;top:330px;width:6px;height:1px;background:#777"></div>
<div style="left:392px;top:362px;width:9px;height:9px;box-sizing:border-box;border:1px solid #777;background:#f4f4f4"></div>
<div style="left:394px;top:366px;width:5px;height:1px;background:#555"></div>
<div style="left:396px;top:371px;width:1px;height:14px;background:#777"></div>
<div style="left:396px;top:384px;width:6px;height:1px;background:#777"></div>
<div class="t" style="left:361.8px;top:180.07px;font-size:14px;font-family:'Liberation Mono',monospace;color:#787878;letter-spacing:1.6px">1</div>
<div class="t" style="left:406.8px;top:180.07px;font-size:14px;font-family:'Liberation Mono',monospace;color:#000;letter-spacing:1.6px"><span style="color:#cc1212">library</span> <span style="color:#1c1c9c">IEEE</span><span style="color:#6a58e0">;</span></div>
<div class="t" style="left:361.8px;top:198.07px;font-size:14px;font-family:'Liberation Mono',monospace;color:#787878;letter-spacing:1.6px">2</div>
<div class="t" style="left:406.8px;top:198.07px;font-size:14px;font-family:'Liberation Mono',monospace;color:#000;letter-spacing:1.6px"><span style="color:#cc1212">use</span> <span style="color:#1c1c9c">IEEE</span><span style="color:#6a58e0">.</span><span style="color:#1c1c9c">std_logic_1164</span><span style="color:#6a58e0">.</span><span style="color:#cc1212">all</span><span style="color:#6a58e0">;</span></div>
<div class="t" style="left:361.8px;top:216.07px;font-size:14px;font-family:'Liberation Mono',monospace;color:#787878;letter-spacing:1.6px">3</div>
<div class="t" style="left:361.8px;top:234.07px;font-size:14px;font-family:'Liberation Mono',monospace;color:#787878;letter-spacing:1.6px">4</div>
<div class="t" style="left:406.8px;top:234.07px;font-size:14px;font-family:'Liberation Mono',monospace;color:#000;letter-spacing:1.6px"><span style="color:#cc1212">entity</span> <span style="color:#8c1c96">porte_3e</span> <span style="color:#cc1212">is</span></div>
<div class="t" style="left:361.8px;top:252.07px;font-size:14px;font-family:'Liberation Mono',monospace;color:#787878;letter-spacing:1.6px">5</div>
<div class="t" style="left:406.8px;top:252.07px;font-size:14px;font-family:'Liberation Mono',monospace;color:#000;letter-spacing:1.6px"><span style="color:#cc1212">port</span><span style="color:#4a70d8">(</span>   <span style="color:#8c1c96">data_in</span>     <span style="color:#8c1c96">:</span>   <span style="color:#cc1212">in</span> <span style="color:#22b422">std_logic_vector</span><span style="color:#4a70d8">(</span><span style="color:#2a8c8c">15</span> <span style="color:#cc1212">downto</span> <span style="color:#2a8c8c">0</span><span style="color:#4a70d8">)</span><span style="color:#6a58e0">;</span></div>
<div class="t" style="left:361.8px;top:270.07px;font-size:14px;font-family:'Liberation Mono',monospace;color:#787878;letter-spacing:1.6px">6</div>
<div class="t" style="left:406.8px;top:270.07px;font-size:14px;font-family:'Liberation Mono',monospace;color:#000;letter-spacing:1.6px">    <span style="color:#8c1c96">oe</span>      <span style="color:#8c1c96">:</span>   <span style="color:#cc1212">in</span> <span style="color:#22b422">std_logic</span><span style="color:#6a58e0">;</span></div>
<div class="t" style="left:361.8px;top:288.07px;font-size:14px;font-family:'Liberation Mono',monospace;color:#787878;letter-spacing:1.6px">7</div>
<div class="t" style="left:406.8px;top:288.07px;font-size:14px;font-family:'Liberation Mono',monospace;color:#000;letter-spacing:1.6px">    <span style="color:#8c1c96">data_out</span>    <span style="color:#8c1c96">:</span>   <span style="color:#cc1212">out</span> <span style="color:#22b422">std_logic_vector</span><span style="color:#4a70d8">(</span><span style="color:#2a8c8c">15</span> <span style="color:#cc1212">downto</span> <span style="color:#2a8c8c">0</span><span style="color:#4a70d8">)</span><span style="color:#4a70d8">)</span><span style="color:#6a58e0">;</span></div>
<div class="t" style="left:361.8px;top:306.07px;font-size:14px;font-family:'Liberation Mono',monospace;color:#787878;letter-spacing:1.6px">8</div>
<div class="t" style="left:406.8px;top:306.07px;font-size:14px;font-family:'Liberation Mono',monospace;color:#000;letter-spacing:1.6px"><span style="color:#cc1212">end</span> <span style="color:#8c1c96">porte_3e</span><span style="color:#6a58e0">;</span></div>
<div class="t" style="left:361.8px;top:324.07px;font-size:14px;font-family:'Liberation Mono',monospace;color:#787878;letter-spacing:1.6px">9</div>
<div class="t" style="left:351.8px;top:342.07px;font-size:14px;font-family:'Liberation Mono',monospace;color:#787878;letter-spacing:1.6px">10</div>
<div class="t" style="left:406.8px;top:342.07px;font-size:14px;font-family:'Liberation Mono',monospace;color:#000;letter-spacing:1.6px"><span style="color:#cc1212">architecture</span> <span style="color:#8c1c96">arch_porte_3e</span> <span style="color:#cc1212">of</span> <span style="color:#8c1c96">porte_3e</span> <span style="color:#cc1212">is</span></div>
<div class="t" style="left:351.8px;top:360.07px;font-size:14px;font-family:'Liberation Mono',monospace;color:#787878;letter-spacing:1.6px">11</div>
<div class="t" style="left:406.8px;top:360.07px;font-size:14px;font-family:'Liberation Mono',monospace;color:#000;letter-spacing:1.6px"><span style="color:#cc1212">begin</span></div>
<div class="t" style="left:351.8px;top:378.07px;font-size:14px;font-family:'Liberation Mono',monospace;color:#787878;letter-spacing:1.6px">12</div>
<div class="t" style="left:406.8px;top:378.07px;font-size:14px;font-family:'Liberation Mono',monospace;color:#000;letter-spacing:1.6px">    <span style="color:#8c1c96">data_out</span> <span style="color:#6a58e0">&lt;=</span> <span style="color:#8c1c96">data_in</span> <span style="color:#cc1212">when</span> <span style="color:#8c1c96">oe</span><span style="color:#8c1c96">=</span><span style="color:#8c1c96">'</span><span style="color:#2a8c8c">1</span><span style="color:#8c1c96">'</span> <span style="color:#cc1212">else</span> <span style="color:#8a8a8a">"ZZZZZZZZZZZZZZZZ"</span><span style="color:#6a58e0">;</span></div>
<div class="t" style="left:351.8px;top:396.07px;font-size:14px;font-family:'Liberation Mono',monospace;color:#787878;letter-spacing:1.6px">13</div>
<div class="t" style="left:406.8px;top:396.07px;font-size:14px;font-family:'Liberation Mono',monospace;color:#000;letter-spacing:1.6px"><span style="color:#cc1212">end</span> <span style="color:#8c1c96">arch_porte_3e</span><span style="color:#6a58e0">;</span></div>
<svg style="left:0;top:0" width="0" height="0"><defs><pattern id="pk" width="2" height="2" patternUnits="userSpaceOnUse"><rect width="1" height="1" fill="#000"/><rect x="1" y="1" width="1" height="1" fill="#000"/></pattern><pattern id="pk4" width="2" height="2" patternUnits="userSpaceOnUse"><rect width="1" height="1" fill="#000"/></pattern><pattern id="pg" width="2" height="2" patternUnits="userSpaceOnUse"><rect width="1" height="1" fill="#3a9a3a"/><rect x="1" y="1" width="1" height="1" fill="#3a9a3a"/></pattern><pattern id="pg4" width="2" height="2" patternUnits="userSpaceOnUse"><rect width="1" height="1" fill="#3a9a3a"/></pattern><pattern id="pb" width="2" height="2" patternUnits="userSpaceOnUse"><rect width="1" height="1" fill="#1010e0"/><rect x="1" y="1" width="1" height="1" fill="#1010e0"/></pattern><pattern id="pb4" width="2" height="2" patternUnits="userSpaceOnUse"><rect width="1" height="1" fill="#1010e0"/></pattern><pattern id="pr" width="2" height="2" patternUnits="userSpaceOnUse"><rect width="1" height="1" fill="#e02010"/><rect x="1" y="1" width="1" height="1" fill="#e02010"/></pattern><pattern id="pr4" width="2" height="2" patternUnits="userSpaceOnUse"><rect width="1" height="1" fill="#e02010"/></pattern><pattern id="po" width="2" height="2" patternUnits="userSpaceOnUse"><rect width="1" height="1" fill="#8a8a20"/><rect x="1" y="1" width="1" height="1" fill="#8a8a20"/></pattern><pattern id="po4" width="2" height="2" patternUnits="userSpaceOnUse"><rect width="1" height="1" fill="#8a8a20"/></pattern><pattern id="py" width="2" height="2" patternUnits="userSpaceOnUse"><rect width="1" height="1" fill="#e8e000"/><rect x="1" y="1" width="1" height="1" fill="#e8e000"/></pattern><pattern id="py4" width="2" height="2" patternUnits="userSpaceOnUse"><rect width="1" height="1" fill="#e8e000"/></pattern><pattern id="plb" width="2" height="2" patternUnits="userSpaceOnUse"><rect width="1" height="1" fill="#3a8ae8"/><rect x="1" y="1" width="1" height="1" fill="#3a8ae8"/></pattern><pattern id="plb4" width="2" height="2" patternUnits="userSpaceOnUse"><rect width="1" height="1" fill="#3a8ae8"/></pattern><pattern id="pgr" width="2" height="2" patternUnits="userSpaceOnUse"><rect width="1" height="1" fill="#555"/><rect x="1" y="1" width="1" height="1" fill="#555"/></pattern><pattern id="pgr4" width="2" height="2" patternUnits="userSpaceOnUse"><rect width="1" height="1" fill="#555"/></pattern></defs></svg>
<svg style="left:16px;top:49px" width="14" height="16" viewBox="0 0 14 16"><path d="M0.5 0.5h9l3.5 3.5v11.5H0.5z" fill="#fff" stroke="#888"/><path d="M13.5 4v11.5H0.5" fill="none" stroke="#000"/><path d="M9.5 0.5v3.5h3.5" fill="none" stroke="#000"/><g fill="#000"><rect x="2" y="3" width="1" height="1"/><rect x="4" y="3" width="2" height="1"/><rect x="7" y="3" width="1" height="1"/><rect x="2" y="5" width="5" height="1"/><rect x="2" y="7" width="3" height="1"/><rect x="6" y="7" width="3" height="1"/><rect x="2" y="9" width="5" height="1"/><rect x="8" y="9" width="2" height="1"/><rect x="2" y="11" width="4" height="1"/><rect x="7" y="11" width="3" height="1"/></g></svg>
<svg style="left:36px;top:57px" width="6" height="4" viewBox="0 0 6 4"><path d="M0 0h6L3 3.5z" fill="#000"/></svg>
<svg style="left:47px;top:50px" width="16" height="14" viewBox="0 0 16 14"><path d="M0.5 4.5h4l1 1h6v8H0.5z" fill="#ffff40" stroke="#000"/><path d="M0.5 13.5l3-6h12l-3 6z" fill="#808000" stroke="#000"/><path d="M9 2.5q2.5-2.5 5 0" fill="none" stroke="#000"/><path d="M13 2l2 1.5-1 2" fill="none" stroke="#000"/></svg>
<svg style="left:70px;top:49px" width="15" height="15" viewBox="0 0 15 15"><rect x="0" y="0" width="15" height="15" rx="1" fill="#000"/><rect x="1.5" y="1" width="12" height="13" fill="#b8b000"/><rect x="3.5" y="1" width="8" height="6" fill="#f0f0f0"/><rect x="3" y="9" width="9" height="5" fill="#000"/><rect x="9" y="10" width="2" height="3" fill="#fff"/></svg>
<svg style="left:90px;top:49px" width="18" height="16" viewBox="0 0 18 16"><path d="M0 7l5-5h6V0l5 4-5 4V6H6L3 9z" fill="url(#pg)"/><path d="M18 9l-5 5H7v2l-5-4 5-4v2h5l3-3z" fill="url(#pg)"/></svg>
<svg style="left:113px;top:49px" width="17" height="15" viewBox="0 0 17 15"><path d="M4 1h8l1 4H4z" fill="url(#pk4)"/><path d="M4 1h8M4 1v4M12 1l1 4" stroke="url(#pk)" stroke-width="1.2" fill="none"/><path d="M1 9l4-4h8l3 4v5H1z" fill="url(#pk4)"/><path d="M1 9l4-4M13 5l3 4v5H1V9h15" stroke="url(#pk)" stroke-width="1.4" fill="none"/><path d="M11 4l2-3 3 3-2 3" fill="#f0f0f0" stroke="url(#pk)" stroke-width="1"/><rect x="7" y="11" width="3" height="1" fill="#ee0"/></svg>
<div style="left:137px;top:50px;width:1px;height:15px;background-image:linear-gradient(180deg,#222 50%,transparent 50%);background-size:1px 2px"></div>
<svg style="left:150px;top:50px" width="10" height="15" viewBox="0 0 10 15"><path d="M1 0l4 7M9 0L5 7" stroke="url(#pk)" stroke-width="2"/><circle cx="2.5" cy="11" r="2.5" fill="none" stroke="url(#pb)" stroke-width="1.6"/><circle cx="7.5" cy="11" r="2.5" fill="none" stroke="url(#pb)" stroke-width="1.6"/></svg>
<svg style="left:168px;top:49px" width="18" height="16" viewBox="0 0 18 16"><path d="M1 1h5l3 3v7H1z" fill="none" stroke="url(#pk)" stroke-width="1.6"/><path d="M7 5h6l4 4v7H7z" fill="url(#pk4)"/><path d="M7 5h6l4 4v7H7z" fill="none" stroke="url(#pb)" stroke-width="1.6"/></svg>
<svg style="left:190px;top:48px" width="17" height="17" viewBox="0 0 17 17"><path d="M1 3h12v11H1z" fill="url(#po)"/><path d="M1 3h12v11H1z" fill="none" stroke="url(#pk)" stroke-width="1.4"/><path d="M4 1h6v3H4z" fill="url(#pk)"/><rect x="6" y="1" width="2" height="1" fill="#ee0"/><path d="M7 8h6l3 3v5H7z" fill="#f0f0f0"/><path d="M7 8h6l3 3v5H7z" fill="url(#pk4)" stroke="url(#pb)" stroke-width="1.6"/></svg>
<svg style="left:214px;top:49px" width="10" height="16" viewBox="0 0 10 16"><path d="M0 4l3 3M0 7l3-3" stroke="#000" stroke-width="1"/><path d="M6 2h4" stroke="url(#pk)" stroke-width="2"/><path d="M0 14h10" stroke="url(#pk)" stroke-width="2"/></svg>
<div style="left:454px;top:52px;width:1px;height:15px;background-image:linear-gradient(180deg,#222 50%,transparent 50%);background-size:1px 2px"></div>
<svg style="left:463px;top:51px" width="11" height="14" viewBox="0 0 11 14"><rect x="0.5" y="0.5" width="10" height="13" fill="#fff" stroke="#808080"/><g fill="#000"><rect x="2" y="3" width="4" height="1"/><rect x="3" y="5" width="4" height="1"/><rect x="2" y="7" width="5" height="1"/><rect x="3" y="9" width="4" height="1"/><rect x="2" y="11" width="6" height="1"/></g></svg>
<svg style="left:473px;top:51px" width="7" height="15" viewBox="0 0 7 15"><path d="M3.5 2v13M0 1.2h7M0.5 5l3-3 3 3M0.5 8l3-3 3 3" stroke="#000090" stroke-width="1.3" fill="none"/></svg>
<div style="left:486px;top:50px;width:59px;height:17px;background:#fff;border-top:1px solid #9a9a9a;border-left:1px solid #9a9a9a;box-sizing:border-box"></div>
<div class="t" style="left:502.5px;top:54.75px;font-size:10.5px;font-family:'Liberation Mono',monospace;color:#000;letter-spacing:0.7px">100 ns</div>
<div style="left:547px;top:50px;width:13px;height:9px;background:#f0f0f0;border-top:1px solid #fff;border-left:1px solid #fff;border-right:1px solid #808080;border-bottom:1px solid #808080;box-sizing:border-box"></div>
<div style="left:547px;top:59px;width:13px;height:9px;background:#f0f0f0;border-top:1px solid #fff;border-left:1px solid #fff;border-right:1px solid #808080;border-bottom:1px solid #808080;box-sizing:border-box"></div>
<div style="left:546px;top:67px;width:14px;height:1px;background:#808080"></div>
<svg style="left:550px;top:51px" width="8" height="6" viewBox="0 0 8 6"><path d="M0 5h8L4 0z" fill="#000"/></svg>
<svg style="left:550px;top:61px" width="8" height="6" viewBox="0 0 8 6"><path d="M0 0h8L4 5z" fill="#000"/></svg>
<svg style="left:568px;top:51px" width="11" height="14" viewBox="0 0 11 14"><rect x="0.5" y="0.5" width="10" height="13" fill="#fff" stroke="#808080"/><g fill="#000"><rect x="2" y="3" width="4" height="1"/><rect x="3" y="5" width="4" height="1"/><rect x="2" y="7" width="5" height="1"/><rect x="3" y="9" width="4" height="1"/><rect x="2" y="11" width="6" height="1"/></g></svg>
<svg style="left:578px;top:51px" width="7" height="15" viewBox="0 0 7 15"><path d="M3.5 0v13M0 11h7M0.5 10l3 3 3-3" stroke="#000090" stroke-width="1.3" fill="none"/></svg>
<svg style="left:590px;top:51px" width="11" height="14" viewBox="0 0 11 14"><rect x="0.5" y="0.5" width="10" height="13" fill="#fff" stroke="#808080"/><g fill="#000"><rect x="2" y="3" width="4" height="1"/><rect x="3" y="5" width="4" height="1"/><rect x="2" y="7" width="5" height="1"/><rect x="3" y="9" width="4" height="1"/><rect x="2" y="11" width="6" height="1"/></g></svg>
<svg style="left:600px;top:51px" width="7" height="15" viewBox="0 0 7 15"><path d="M3.5 4.5v10M0.5 11l3 3 3-3" stroke="#000090" stroke-width="1.3" fill="none"/><path d="M3.5 0.5l2.5 2.5-2.5 2.5L1 3z" fill="#fff" stroke="#e01010" stroke-width="0.9"/></svg>
<svg style="left:612px;top:51px" width="11" height="14" viewBox="0 0 11 14"><rect x="0.5" y="0.5" width="10" height="13" fill="#fff" stroke="#808080"/><g fill="#000"><rect x="2" y="3" width="4" height="1"/><rect x="3" y="5" width="4" height="1"/><rect x="2" y="7" width="5" height="1"/><rect x="3" y="9" width="4" height="1"/><rect x="2" y="11" width="6" height="1"/></g></svg>
<svg style="left:622px;top:51px" width="7" height="15" viewBox="0 0 7 15"><path d="M3.5 0v14M0.5 8l3 3 3-3M0.5 11l3 3 3-3" stroke="#000090" stroke-width="1.3" fill="none"/></svg>
<svg style="left:634px;top:51px" width="11" height="14" viewBox="0 0 11 14"><rect x="0.5" y="0.5" width="10" height="13" fill="#fff" stroke="#808080"/><g fill="#000"><rect x="2" y="3" width="4" height="1"/><rect x="3" y="5" width="4" height="1"/><rect x="2" y="7" width="5" height="1"/><rect x="3" y="9" width="4" height="1"/><rect x="2" y="11" width="6" height="1"/></g></svg>
<svg style="left:638px;top:49px" width="14" height="13" viewBox="0 0 14 13"><path d="M1 1l11 11M12 1L1 12" stroke="#800000" stroke-width="2.2"/><path d="M3 1l2-1h7" stroke="#888" stroke-width="1.3" fill="none"/></svg>
<svg style="left:645px;top:56px" width="6" height="11" viewBox="0 0 6 11"><path d="M3 0v10M0 10h6M0 6l3 3 3-3" stroke="#000090" stroke-width="1.2" fill="none"/></svg>
<svg style="left:655px;top:52px" width="15" height="15" viewBox="0 0 15 15"><circle cx="7.5" cy="7.5" r="7" fill="url(#pr)"/><circle cx="8" cy="7.5" r="3" fill="#f0f0f0"/><rect x="7" y="4" width="1" height="7" fill="url(#pr)"/></svg>
<div style="left:680px;top:52px;width:1px;height:15px;background-image:linear-gradient(180deg,#222 50%,transparent 50%);background-size:1px 2px"></div>
<div style="left:688px;top:49px;width:21px;height:20px;background:#f0f0f0;border-top:1px solid #fff;border-left:1px solid #fff;border-right:1px solid #808080;border-bottom:1px solid #808080;box-sizing:border-box"></div>
<div style="left:715px;top:49px;width:21px;height:20px;background:#f0f0f0;border-top:1px solid #fff;border-left:1px solid #fff;border-right:1px solid #808080;border-bottom:1px solid #808080;box-sizing:border-box"></div>
<svg style="left:692px;top:52px" width="14" height="15" viewBox="0 0 14 15"><path d="M0 3q3-4 6 0q3 4-1 4q-3 0-5-2z" fill="url(#pk)"/><path d="M4 8h10v7H4z" fill="url(#pk)"/><path d="M7 2l3 4v8" stroke="#f0e000" stroke-width="1.6" fill="none"/><path d="M11 3v10" stroke="#e02020" stroke-width="1.6"/><path d="M5 12l2-2" stroke="#20d020" stroke-width="1.4"/></svg>
<svg style="left:719px;top:52px" width="14" height="15" viewBox="0 0 14 15"><path d="M0 4q2-4 5-3q4 1 3 5" fill="none" stroke="url(#pk)" stroke-width="2"/><path d="M4 8h10v7H4z" fill="url(#pk)"/><path d="M7 2l3 4v8" stroke="#f0e000" stroke-width="1.6" fill="none"/><path d="M11 3v10" stroke="#e02020" stroke-width="1.6"/><path d="M5 12l2-2" stroke="#20d020" stroke-width="1.4"/></svg>
<svg style="left:741px;top:50px" width="17" height="18" viewBox="0 0 17 18"><path d="M2 8l3 2V3q0-1 1.2-1 1.2 0 1.2 1v4V1.5q0-1 1.2-1 1.2 0 1.2 1V7V2q0-1 1.2-1t1.2 1v5V4q0-1 1-1t1 1v8q0 4-4 5H8q-2 0-3.5-2L1 10q-0.5-1.5 1-2z" fill="#fff" stroke="#000" stroke-width="1.1"/><path d="M7 17l7-4" stroke="#6a9ae0" stroke-width="3"/><circle cx="14" cy="11" r="2.5" fill="#aaa"/></svg>
<svg style="left:904px;top:49px" width="16" height="17" viewBox="0 0 16 17"><path d="M1 9l7-4 7 4-7 4z" fill="#fff" stroke="#000"/><path d="M1 11l7 4 7-4M1 13l7 4 7-4" fill="none" stroke="#000"/><path d="M8 0v7M5 4l3 3 3-3" stroke="#000090" stroke-width="1.8" fill="none"/></svg>
<svg style="left:925px;top:49px" width="16" height="17" viewBox="0 0 16 17"><rect x="0.5" y="2.5" width="15" height="12" fill="none" stroke="url(#pk)" stroke-width="1.2"/><path d="M5 4q3-4 6 0t-3 5v3" fill="none" stroke="url(#plb)" stroke-width="1.8"/><circle cx="8" cy="15" r="1" fill="#3a8ae8"/></svg>
<svg style="left:946px;top:49px" width="17" height="16" viewBox="0 0 17 16"><path d="M0 6h17v10H0z" fill="url(#pk)"/><path d="M3 0v5l-2-2M3 5l2-2M8 0v5l-2-2M8 5l2-2M13 0v5l-2-2M13 5l2-2" stroke="url(#pb)" stroke-width="1.2" fill="none"/></svg>
<svg style="left:968px;top:49px" width="17" height="17" viewBox="0 0 17 17"><path d="M4 1h9l-2 12H3z" fill="#fff" stroke="#000" stroke-width="1.3"/><path d="M5 3h6M5 5h6M5 7h6M4.5 9h6" stroke="#303080" stroke-width="0.9"/><path d="M0 3h3M0 5h3M0 7h3" stroke="#8888cc" stroke-width="0.8"/><circle cx="3" cy="13" r="2.6" fill="#e00010" stroke="#000"/><circle cx="14" cy="13" r="2.6" fill="#e00010" stroke="#000"/><path d="M3 13h11" stroke="#000"/></svg>
<svg style="left:990px;top:50px" width="11" height="14" viewBox="0 0 11 14"><rect x="0.5" y="0.5" width="10" height="13" fill="#fff" stroke="#808080"/><g fill="#000"><rect x="2" y="3" width="4" height="1"/><rect x="3" y="5" width="4" height="1"/><rect x="2" y="7" width="5" height="1"/><rect x="3" y="9" width="4" height="1"/><rect x="2" y="11" width="6" height="1"/></g></svg>
<svg style="left:995px;top:49px" width="13" height="17" viewBox="0 0 13 17"><path d="M1 1l11 11M12 1L1 12" stroke="#800000" stroke-width="2.2"/><path d="M8 8v8M5 16h6M5 12l3 3 3-3" stroke="#000090" stroke-width="1.2" fill="none"/></svg>
<svg style="left:1034px;top:49px" width="12" height="17" viewBox="0 0 12 17"><path d="M3 0h6v6h3l-6 6-6-6h3z" fill="#1060e0"/><circle cx="6" cy="14.5" r="2.3" fill="#1060e0"/><path d="M4 1h2v5" stroke="#80b0ff" stroke-width="1" fill="none"/></svg>
<svg style="left:1052px;top:50px" width="12" height="16" viewBox="0 0 12 16"><path d="M2 10q0-8 8-8" fill="none" stroke="#1060e0" stroke-width="3"/><circle cx="3" cy="12" r="2.5" fill="#1060e0"/></svg>
<div class="t" style="left:18px;top:82.69px;font-size:11px;font-family:'Liberation Sans',sans-serif;color:#000;transform:scaleX(0.955);transform-origin:0 0;">ColumnLayout</div>
<div style="left:91px;top:80px;width:240px;height:18px;background:#f0f0f0;border-top:1px solid #9a9a9a;border-left:1px solid #9a9a9a;box-sizing:border-box"></div>
<div style="left:92px;top:97px;width:240px;height:1px;background:#ffffff"></div>
<div class="t" style="left:93.3px;top:84.95px;font-size:10.5px;font-family:'Liberation Mono',monospace;color:#000;letter-spacing:0.7px;font-weight:bold;opacity:0.8">Default</div>
<svg style="left:537px;top:83px" width="17" height="17" viewBox="0 0 17 17"><path d="M1 3h11v7H1z" fill="url(#plb)"/><path d="M11 1l-3 8" stroke="#a07040" stroke-width="1.3"/><path d="M11.5 10l3.5 3.5-3.5 3.5-3.5-3.5z" fill="none" stroke="#40a040" stroke-width="1.2"/></svg>
<svg style="left:559px;top:89px" width="5" height="3" viewBox="0 0 5 3"><path d="M0 0h5L2.5 3z" fill="#000"/></svg>
<svg style="left:568px;top:83px" width="16" height="12" viewBox="0 0 16 12"><path d="M1 3l3-2h10v8l-3 2H1z" fill="#5aa0f0"/><path d="M1 3h10v8H1z" fill="#3a80e0"/><path d="M3 5q3-2 5 0t5-1" stroke="#c0e0ff" stroke-width="1.3" fill="none"/></svg>
<svg style="left:576px;top:82px" width="10" height="18" viewBox="0 0 10 18"><path d="M4 1l2 1-2 9" stroke="#a06030" stroke-width="1.6" fill="none"/><circle cx="4.5" cy="13.5" r="4" fill="#e05020"/><rect x="2" y="13" width="5" height="1.4" fill="#fff"/></svg>
<svg style="left:590px;top:89px" width="6" height="4" viewBox="0 0 6 4"><path d="M0 0h6L3 3.5z" fill="#000"/></svg>
<svg style="left:601px;top:83px" width="16" height="12" viewBox="0 0 16 12"><path d="M1 3l3-2h10v8l-3 2H1z" fill="#5aa0f0"/><path d="M1 3h10v8H1z" fill="#3a80e0"/><path d="M3 5q3-2 5 0t5-1" stroke="#c0e0ff" stroke-width="1.3" fill="none"/></svg>
<svg style="left:606px;top:82px" width="12" height="17" viewBox="0 0 12 17"><path d="M10 1l2 2-8 12-4 1 1-4z" fill="#f0c040" stroke="#a07020" stroke-width="0.8"/></svg>
<svg style="left:622px;top:83px" width="16" height="12" viewBox="0 0 16 12"><path d="M1 3l3-2h10v8l-3 2H1z" fill="#5aa0f0"/><path d="M1 3h10v8H1z" fill="#3a80e0"/><path d="M3 5q3-2 5 0t5-1" stroke="#c0e0ff" stroke-width="1.3" fill="none"/></svg>
<svg style="left:627px;top:82px" width="12" height="18" viewBox="0 0 12 18"><path d="M6 1l2 1v6" stroke="#a06030" stroke-width="1.4" fill="none"/><rect x="1" y="8" width="11" height="10" fill="#5a80d0"/><rect x="3" y="8" width="7" height="4" fill="#fff"/><rect x="3" y="14" width="7" height="3" fill="#c0e0a0"/></svg>
<svg style="left:642px;top:89px" width="6" height="4" viewBox="0 0 6 4"><path d="M0 0h6L3 3.5z" fill="#000"/></svg>
<svg style="left:653px;top:83px" width="16" height="12" viewBox="0 0 16 12"><path d="M1 3l3-2h10v8l-3 2H1z" fill="#5aa0f0"/><path d="M1 3h10v8H1z" fill="#3a80e0"/><path d="M3 5q3-2 5 0t5-1" stroke="#c0e0ff" stroke-width="1.3" fill="none"/></svg>
<svg style="left:660px;top:86px" width="10" height="14" viewBox="0 0 10 14"><path d="M6 1v2l2 1" stroke="#a06030" stroke-width="1.2" fill="none"/><path d="M0 6h4V3l6 5-6 5v-3H0z" fill="#40a030" stroke="#206010" stroke-width="0.6"/></svg>
<svg style="left:694px;top:82px" width="10" height="15" viewBox="0 0 10 15"><path d="M1 1l8 13M9 1L1 14" stroke="#902020" stroke-width="1.1" stroke-dasharray="1.6 1"/></svg>
<svg style="left:703px;top:84px" width="6" height="10" viewBox="0 0 6 10"><path d="M5.5 0L0 5l5.5 5z" fill="url(#pk)"/></svg>
<svg style="left:714px;top:84px" width="6" height="10" viewBox="0 0 6 10"><path d="M0.5 0L6 5l-5.5 5z" fill="url(#pk)"/></svg>
<svg style="left:720px;top:82px" width="10" height="15" viewBox="0 0 10 15"><path d="M1 1l8 13M9 1L1 14" stroke="#902020" stroke-width="1.1" stroke-dasharray="1.6 1"/></svg>
<div style="left:737px;top:81px;width:21px;height:20px;background:#f0f0f0;border-top:1px solid #fff;border-left:1px solid #fff;border-right:1px solid #808080;border-bottom:1px solid #808080;box-sizing:border-box"></div>
<svg style="left:741px;top:84px" width="12" height="14" viewBox="0 0 12 14"><path d="M1 1h6l4 4v8H1z" fill="none" stroke="url(#pk)" stroke-width="1.6"/><g fill="#f02020"><rect x="3" y="3" width="1" height="1"/><rect x="2" y="6" width="1" height="1"/><rect x="8" y="6" width="1" height="1"/><rect x="5" y="9" width="1" height="1"/></g></svg>
<svg style="left:766px;top:83px" width="14" height="18" viewBox="0 0 14 18"><path d="M1 2l10 10M11 1L1 11" stroke="#903030" stroke-width="1"/><path d="M12 1L2 13" stroke="#888" stroke-width="1"/><path d="M7 11l4-4 3 3-4 7z" fill="url(#pk)"/><path d="M8 11l3-3 2 2-3 5z" fill="url(#pb)"/></svg>
<div style="left:803px;top:81px;width:20px;height:20px;background:#fff;border-top:1px solid #a0a0a0;border-left:1px solid #a0a0a0;border-right:1px solid #f4f4f4;border-bottom:1px solid #f4f4f4;box-sizing:border-box"></div>
<div style="left:829px;top:81px;width:20px;height:20px;background:#fff;border-top:1px solid #a0a0a0;border-left:1px solid #a0a0a0;border-right:1px solid #f4f4f4;border-bottom:1px solid #f4f4f4;box-sizing:border-box"></div>
<div style="left:855px;top:81px;width:20px;height:20px;background:#fff;border-top:1px solid #a0a0a0;border-left:1px solid #a0a0a0;border-right:1px solid #f4f4f4;border-bottom:1px solid #f4f4f4;box-sizing:border-box"></div>
<div style="left:881px;top:81px;width:20px;height:20px;background:#fff;border-top:1px solid #a0a0a0;border-left:1px solid #a0a0a0;border-right:1px solid #f4f4f4;border-bottom:1px solid #f4f4f4;box-sizing:border-box"></div>
<div style="left:907px;top:81px;width:20px;height:20px;background:#f0f0f0;border-top:1px solid #fff;border-left:1px solid #fff;border-right:1px solid #808080;border-bottom:1px solid #808080;box-sizing:border-box"></div>
<div class="t" style="left:810.8px;top:84.61px;font-size:13px;font-family:'Liberation Serif',serif;color:#000;">I</div>
<div class="t" style="left:834.5px;top:84.61px;font-size:13px;font-family:'Liberation Serif',serif;color:#000;">O</div>
<div class="t" style="left:857.5px;top:85.45px;font-size:12px;font-family:'Liberation Serif',serif;color:#000;transform:scaleX(0.92);transform-origin:0 0;">I/O</div>
<div style="left:886px;top:86px;width:12px;height:13px;border:1px solid #000;box-sizing:border-box"></div>
<div class="t" style="left:889.5px;top:85.95px;font-size:12px;font-family:'Liberation Serif',serif;color:#000;">i</div>
<div class="t" style="left:910.5px;top:86.61px;font-size:10.5px;font-family:'Liberation Sans',sans-serif;color:#000;transform:scaleX(0.78);transform-origin:0 0;font-weight:bold">ALL</div>
<svg style="left:932px;top:82px" width="19" height="19" viewBox="0 0 19 19"><path d="M3 8l5-5h5v6H3z" fill="#e0c0e8"/><path d="M9 9h9v8H9z" fill="#b8dcc0"/><path d="M3 16l8-8" stroke="#2050d0" stroke-width="4.5" stroke-linecap="round"/><path d="M4 15l6-6" stroke="#80b0ff" stroke-width="1.2"/><path d="M10 6q1-5 7-4l-3 3 1 2 3-1q0 5-5 5z" fill="#a0a0b0"/></svg>
<div style="left:16px;top:113px;width:20px;height:19px;background:#fff;border-top:1px solid #808080;border-left:1px solid #808080;border-right:1px solid #fff;border-bottom:1px solid #fff;box-sizing:border-box"></div>
<svg style="left:21px;top:115px" width="12" height="15" viewBox="0 0 12 15"><path d="M1 1v10l3-3 4 6 2-1-4-6h4z" fill="url(#pk)" stroke="#000" stroke-width="0.5" stroke-dasharray="1 1"/></svg>
<div style="left:42px;top:113px;width:20px;height:19px;background:#f0f0f0;border-top:1px solid #fff;border-left:1px solid #fff;border-right:1px solid #808080;border-bottom:1px solid #808080;box-sizing:border-box"></div>
<div style="left:68px;top:113px;width:20px;height:19px;background:#f0f0f0;border-top:1px solid #fff;border-left:1px solid #fff;border-right:1px solid #808080;border-bottom:1px solid #808080;box-sizing:border-box"></div>
<div style="left:94px;top:113px;width:20px;height:19px;background:#f0f0f0;border-top:1px solid #fff;border-left:1px solid #fff;border-right:1px solid #808080;border-bottom:1px solid #808080;box-sizing:border-box"></div>
<div style="left:120px;top:113px;width:20px;height:19px;background:#f0f0f0;border-top:1px solid #fff;border-left:1px solid #fff;border-right:1px solid #808080;border-bottom:1px solid #808080;box-sizing:border-box"></div>
<svg style="left:45px;top:115px" width="15" height="15" viewBox="0 0 15 15"><path d="M1 4V1h4" stroke="url(#pk)" stroke-width="1.5" fill="none"/><path d="M4 5h6v6H4z" fill="none" stroke="url(#pk)" stroke-width="2.2"/><path d="M9 9l5 5" stroke="url(#pk)" stroke-width="2.2"/></svg>
<svg style="left:70px;top:114px" width="17" height="17" viewBox="0 0 17 17"><path d="M8.5 0.5l3 3h-6zM8.5 16.5l3-3h-6zM0.5 8.5l3-3v6zM16.5 8.5l-3-3v6z" fill="url(#pk)"/><path d="M8.5 3v11M3 8.5h11" stroke="url(#pk)" stroke-width="2"/><path d="M8.5 5l3.5 3.5-3.5 3.5L5 8.5z" fill="none" stroke="url(#pk)" stroke-width="1.5"/></svg>
<svg style="left:98px;top:115px" width="12" height="15" viewBox="0 0 12 15"><path d="M3 0v11M7 1v13M10 3v11M1 13h10" stroke="url(#pk)" stroke-width="1"/><path d="M3 10l-2 2 2 2 2-2z" fill="none" stroke="#000" stroke-width="0.8"/></svg>
<svg style="left:124px;top:115px" width="13" height="15" viewBox="0 0 13 15"><path d="M1 2h4v10h7" stroke="url(#pk)" stroke-width="1.2" fill="none"/><path d="M11 1v4M1 5h1" stroke="url(#pk)" stroke-width="1"/><circle cx="10" cy="10" r="1.2" fill="#000"/><circle cx="2" cy="9" r="1" fill="#000"/></svg>
<div style="left:148px;top:113px;width:1px;height:17px;background-image:linear-gradient(180deg,#222 50%,transparent 50%);background-size:1px 2px"></div>
<svg style="left:157px;top:113px" width="16" height="18" viewBox="0 0 16 18"><rect x="0" y="0" width="8" height="18" fill="url(#pk)"/><circle cx="4" cy="4" r="3" fill="#ff3030"/><circle cx="4" cy="9" r="2" fill="#f0e000"/><circle cx="4" cy="14" r="1.5" fill="#30e030"/><path d="M9.5 4l5 5-5 5" stroke="#000" stroke-width="1" fill="none" stroke-dasharray="1 0.7"/></svg>
<svg style="left:751px;top:113px" width="17" height="17" viewBox="0 0 17 17"><circle cx="6.5" cy="6.5" r="5.5" fill="none" stroke="url(#pk)" stroke-width="1.2"/><path d="M6.5 3.5l3 3-3 3-3-3z" fill="url(#pk4)" stroke="url(#pk)" stroke-width="0.8"/><path d="M10.5 10.5l5 5" stroke="#1020c0" stroke-width="1.4"/></svg>
<svg style="left:774px;top:113px" width="17" height="17" viewBox="0 0 17 17"><circle cx="6.5" cy="6.5" r="5.5" fill="none" stroke="url(#pk)" stroke-width="1.2"/><path d="M3 7l2-2 2 2 2-2 2 2" stroke="#000" stroke-width="0.8" fill="none"/><path d="M10.5 10.5l5 5" stroke="#1020c0" stroke-width="1.4"/></svg>
<svg style="left:796px;top:113px" width="17" height="17" viewBox="0 0 17 17"><circle cx="6.5" cy="6.5" r="5.8" fill="url(#pk)"/><circle cx="6.5" cy="6.5" r="5" fill="url(#plb)" opacity="0.8"/><path d="M10.5 10.5l5 5" stroke="#1020c0" stroke-width="1.4"/></svg>
<svg style="left:817px;top:112px" width="17" height="17" viewBox="0 0 17 17"><path d="M4 1v11" stroke="url(#py)" stroke-width="2.2"/><path d="M0.5 12q3.5-3 7 0t-7 3z" fill="none" stroke="#e0b000" stroke-width="1.4" stroke-dasharray="1 0.6"/><path d="M10 3l3-2 3 3-3 3z" fill="#aaa" stroke="#333" stroke-width="0.6"/><path d="M14 7v4" stroke="#1020c0" stroke-width="1.2" stroke-dasharray="1 1"/></svg>
<svg style="left:838px;top:112px" width="19" height="17" viewBox="0 0 19 17"><path d="M4 5v7M10 5v7" stroke="url(#py)" stroke-width="2"/><path d="M0.5 13q3.5-3 6.5 0t-6.5 3zM7 13q3.5-3 6.5 0t-6.5 3z" fill="none" stroke="#e0b000" stroke-width="1.3" stroke-dasharray="1 0.6"/><path d="M11 3l3-2 3 3-3 3z" fill="#aaa" stroke="#333" stroke-width="0.6"/><path d="M15 7v4" stroke="#1020c0" stroke-width="1.2" stroke-dasharray="1 1"/></svg>
<svg style="left:860px;top:112px" width="18" height="17" viewBox="0 0 18 17"><path d="M0.5 1h8v9h-8z" fill="none" stroke="url(#pb)" stroke-width="1.3"/><path d="M3 5l6 0v5" stroke="url(#pk)" stroke-width="1.2" fill="none"/><path d="M8 7l3-2 4 4-3 3z" fill="#aaa" stroke="#333" stroke-width="0.7"/><path d="M13 12l4 4" stroke="#1020c0" stroke-width="1.5" stroke-dasharray="1.2 0.8"/></svg>
<svg style="left:0px;top:141px" width="18" height="18" viewBox="0 0 18 18"><path d="M9 3h6.5l2 2-1.5 9H7.5z" fill="#fff"/><path d="M9 3h6.5l2 2M17.5 5l-1.5 9M7.5 13l1.5-10" fill="none" stroke="#000" stroke-width="1.2"/><g fill="#6a6ab0"><rect x="4" y="3" width="3" height="1"/><rect x="4" y="5" width="3" height="1"/><rect x="3" y="7" width="3" height="1"/><rect x="3" y="9" width="2" height="1"/><rect x="3" y="11" width="2" height="1"/></g><g fill="#303090"><rect x="11" y="5" width="4" height="1"/><rect x="10" y="7" width="4" height="1"/><rect x="10" y="9" width="4" height="1"/><rect x="9.5" y="11" width="4" height="1"/><rect x="9" y="13" width="4" height="1"/></g><path d="M6.5 11.5l3.5 3.5-3.5 3.5-3.5-3.5z" fill="#e01030" stroke="#000" stroke-width="1"/><circle cx="6.5" cy="15" r="0.9" fill="#000"/><path d="M16.5 13l2.5 2.5-2.5 2.5-2.5-2.5z" fill="#e01030" stroke="#000" stroke-width="1"/><path d="M9 14.5h5" stroke="#000" stroke-width="1"/></svg>
<div style="left:224px;top:41px;width:109px;height:123px;background:#f0f0f0;border:1px solid #979797;box-sizing:border-box;box-shadow:2px 2px 2px rgba(0,0,0,0.35), inset 1px 1px 0 #fff"></div>
<div style="left:227px;top:44px;width:100px;height:18px;background:#98b2d4"></div>
<div class="t" style="left:247.2px;top:48.29px;font-size:11px;font-family:'Liberation Sans',sans-serif;color:#000;transform:scaleX(1.0);transform-origin:0 0;">To Wave</div>
<svg style="left:319px;top:48px" width="5" height="8"><path d="M0 0l4.5 4L0 8z" fill="#fff"/></svg>
<div class="t" style="left:247.2px;top:66.29px;font-size:11px;font-family:'Liberation Sans',sans-serif;color:#000;transform:scaleX(1.0);transform-origin:0 0;">To List</div>
<svg style="left:319px;top:66px" width="5" height="8"><path d="M0 0l4.5 4L0 8z" fill="#000"/></svg>
<div class="t" style="left:247.2px;top:84.29px;font-size:11px;font-family:'Liberation Sans',sans-serif;color:#000;transform:scaleX(1.0);transform-origin:0 0;">To Log</div>
<svg style="left:319px;top:84px" width="5" height="8"><path d="M0 0l4.5 4L0 8z" fill="#000"/></svg>
<div class="t" style="left:247.2px;top:102.29px;font-size:11px;font-family:'Liberation Sans',sans-serif;color:#000;transform:scaleX(1.0);transform-origin:0 0;">To Dataflow</div>
<svg style="left:319px;top:102px" width="5" height="8"><path d="M0 0l4.5 4L0 8z" fill="#000"/></svg>
<div class="t" style="left:247.2px;top:120.29px;font-size:11px;font-family:'Liberation Sans',sans-serif;color:#000;transform:scaleX(1.0);transform-origin:0 0;">To Watch</div>
<svg style="left:319px;top:120px" width="5" height="8"><path d="M0 0l4.5 4L0 8z" fill="#000"/></svg>
<div style="left:227px;top:137px;width:102px;height:1px;background:#a0a0a0"></div>
<div style="left:227px;top:138px;width:102px;height:1px;background:#ffffff"></div>
<div class="t" style="left:247.4px;top:147.19px;font-size:11px;font-family:'Liberation Sans',sans-serif;color:#80808a;transform:scaleX(0.955);transform-origin:0 0;">Window Pane</div>
<div style="left:327px;top:42px;width:124px;height:58px;background:#f0f0f0;border:1px solid #979797;box-sizing:border-box;box-shadow:2px 2px 2px rgba(0,0,0,0.35), inset 1px 1px 0 #fff"></div>
<div style="left:330px;top:80px;width:118px;height:18px;background:#98b2d4"></div>
<div class="t" style="left:350.6px;top:47.69px;font-size:11px;font-family:'Liberation Sans',sans-serif;color:#80808a;transform:scaleX(0.93);transform-origin:0 0;">Selected Signals</div>
<div class="t" style="left:350.6px;top:65.69px;font-size:11px;font-family:'Liberation Sans',sans-serif;color:#000;transform:scaleX(0.93);transform-origin:0 0;">Signals in Region</div>
<div class="t" style="left:350.6px;top:83.69px;font-size:11px;font-family:'Liberation Sans',sans-serif;color:#000;transform:scaleX(0.93);transform-origin:0 0;">Signals in Design</div>
</body></html>
